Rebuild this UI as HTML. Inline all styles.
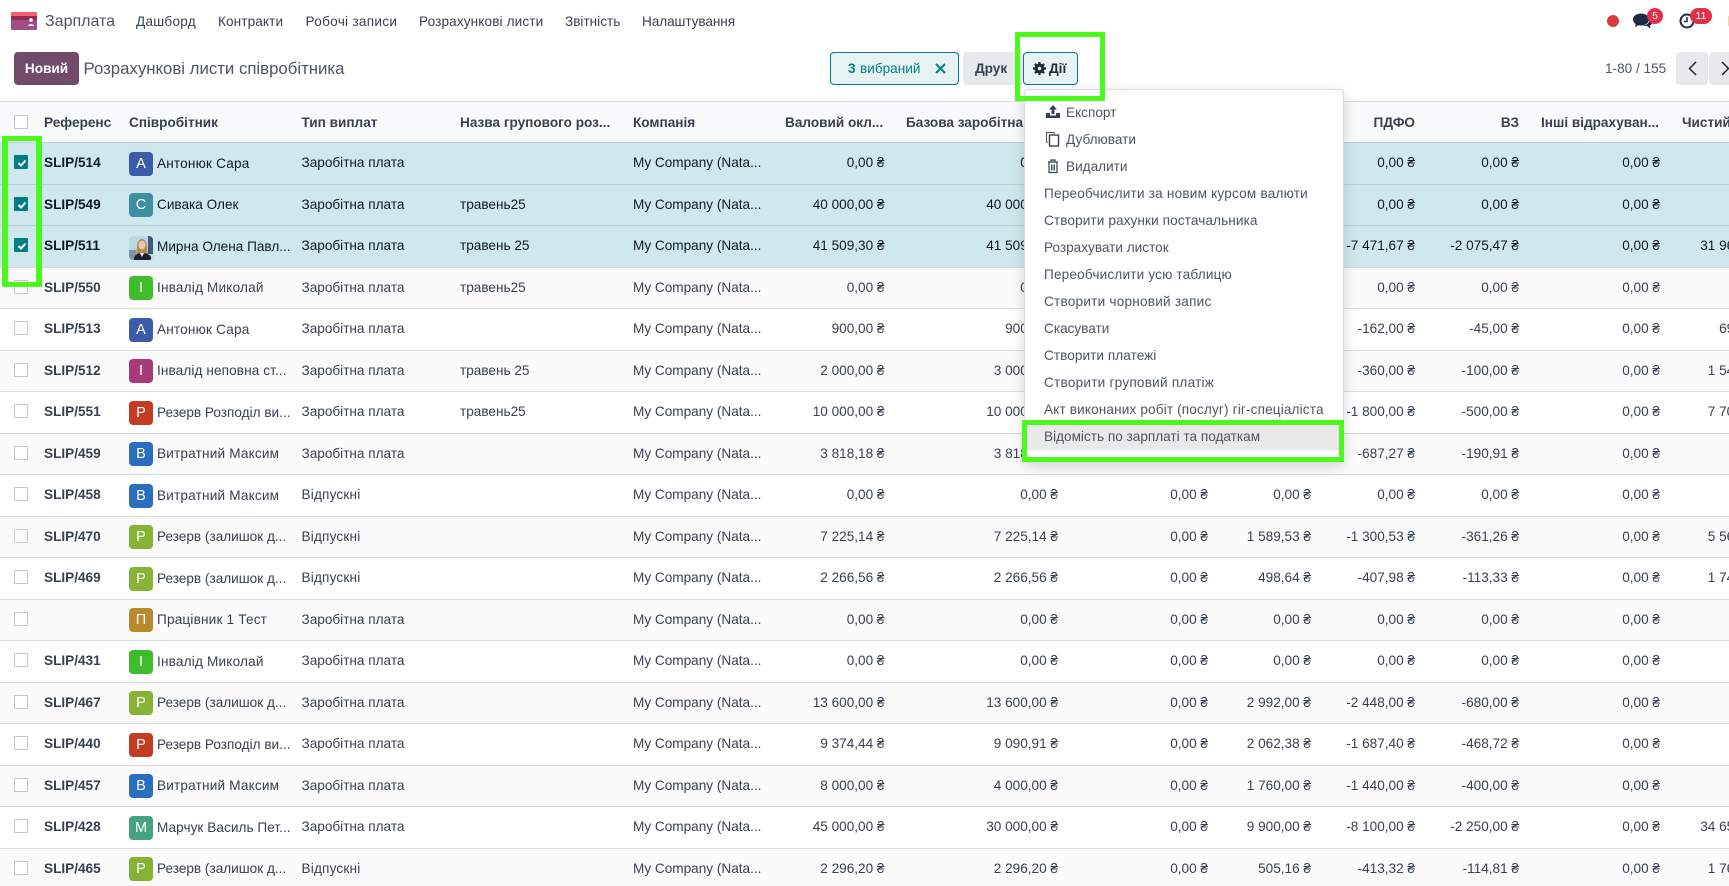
<!DOCTYPE html>
<html lang="uk"><head><meta charset="utf-8"><title>Зарплата</title>
<style>
*{box-sizing:border-box}
html,body{margin:0;padding:0;width:1729px;height:886px;overflow:hidden;background:#fff}
body{font-family:"Liberation Sans","Noto Sans CJK SC",sans-serif;font-size:13.6px;color:#374151;position:relative}
.t{position:absolute;white-space:nowrap;line-height:20px}
.nav{top:12px;color:#374151}
.r{position:absolute;left:0;width:1729px;border-top:1px solid #d9dbde;background:#fff;overflow:hidden}
.r.g{background:#fbfbfb}
.r.s{background:#cfe8ed;border-top-color:#b7d3d9;color:#111827}
.r>*{position:absolute;white-space:nowrap;line-height:20px;top:10px}
.cb{left:14px;top:12px!important;width:14px;height:14px;border:1px solid #c3c6ca;background:#fff;border-radius:1px}
.s .cb{background:#017e84;border-color:#017e84}
.cb svg{position:absolute;left:2px;top:2px}
.ref{left:44px;font-weight:bold;color:#374151}
.s .ref{color:#111827}
.av{left:129px;top:9px!important;width:24px;height:24px;border-radius:4px;color:#fff;text-align:center;line-height:24px!important;font-size:14.5px}
.nm{left:157px;top:11px!important}
.r[style*="height:42px"] .av,.r[style*="height:38px"] .av{top:8px!important}
.r[style*="height:42px"] .nm,.r[style*="height:38px"] .nm{top:10px!important}
.w{letter-spacing:.18px}
.ty{left:301.5px}
.gn{left:460px}
.co{left:633px}
.n{width:140px;text-align:right}
.a{left:744.5px}.b{left:918px}.c{left:1068px}.d{left:1171px}.e{left:1275px}.f{left:1379px}.h{left:1520px}.k{left:1632px}
.hd{position:absolute;left:0;top:101px;width:1729px;height:42px;background:#f9fafb;border-top:1px solid #d9dbde}
.hd span{position:absolute;top:11px;font-weight:bold;line-height:20px;white-space:nowrap;color:#374151}
.btn{position:absolute;top:52px;height:33px;border-radius:4px;line-height:33px;white-space:nowrap}
.dd{position:absolute;left:1024px;top:89px;width:320px;height:374px;background:#fff;border:1px solid #d9dbde;border-radius:4px;box-shadow:0 4px 14px rgba(0,0,0,.16);z-index:5}
.dd div{position:absolute;left:0;width:100%;height:27px;line-height:27px;padding-left:19px;white-space:nowrap;color:#4b5563}
.dd div.ic{padding-left:41px}
.dd svg{position:absolute;left:20px;top:5px}
.gb{position:absolute;border:5px solid #4cf91c;z-index:6}
</style></head><body>

<svg style="position:absolute;left:11px;top:12px" width="26" height="18" viewBox="0 0 26 18"><path d="M1 0h24a1 1 0 0 1 1 1v3H0V1a1 1 0 0 1 1-1z" fill="#f2616f"/><rect y="4" width="26" height="4" fill="#96294d"/><path d="M0 8h26v9a1 1 0 0 1-1 1H1a1 1 0 0 1-1-1z" fill="#a04c86"/><circle cx="20" cy="8" r="1.8" fill="#fff"/><path d="M17 14c0-2.400 6-2.400 6 0z" fill="#fff"/></svg>
<div class="t" style="left:45px;top:12px;font-size:16px;color:#4b5563">Зарплата</div>
<div class="t nav" style="left:136px;letter-spacing:.25px">Дашборд</div>
<div class="t nav" style="left:218px;letter-spacing:.1px">Контракти</div>
<div class="t nav" style="left:305.5px;letter-spacing:.28px">Робочі записи</div>
<div class="t nav" style="left:419px;letter-spacing:.12px">Розрахункові листи</div>
<div class="t nav" style="left:565px">Звітність</div>
<div class="t nav" style="left:642px;letter-spacing:-.08px">Налаштування</div>

<div style="position:absolute;left:1607px;top:15px;width:12px;height:12px;border-radius:50%;background:#d63c3c"></div>
<svg style="position:absolute;left:1633px;top:13px" width="20" height="17" viewBox="0 0 20 17"><ellipse cx="8" cy="6.500" rx="8" ry="6" fill="#1f2a44"/><path d="M3 10l-1 4 5-2.500z" fill="#1f2a44"/><path d="M16.500 5c2 1 3 2.500 3 4 0 1.500-1 2.800-2.500 3.500l.5 3-3.500-2.500c-1.500.2-3 0-4-.5 4 0 7-2.500 6.500-7.500z" fill="#1f2a44"/></svg>
<div style="position:absolute;left:1647px;top:8px;width:16px;height:16px;border-radius:8px;background:#e0304a;color:#fff;font-size:10.500px;line-height:16px;text-align:center">5</div>
<svg style="position:absolute;left:1679px;top:13px" width="16" height="16" viewBox="0 0 16 16"><circle cx="8" cy="8" r="6.500" fill="none" stroke="#1f2a44" stroke-width="2"/><path d="M8 4v4.500H5" fill="none" stroke="#1f2a44" stroke-width="1.500"/></svg>
<div style="position:absolute;left:1690px;top:8px;width:22px;height:16px;border-radius:8px;background:#e0304a;color:#fff;font-size:10.500px;line-height:16px;text-align:center">11</div>
<div style="position:absolute;left:1728px;top:16px;width:1px;height:10px;background:#f7d9a0"></div>

<div class="btn" style="left:14px;width:65px;background:#714b67;color:#fff;font-weight:bold;text-align:center">Новий</div>
<div class="t" style="left:83.5px;top:59px;font-size:16.8px;color:#4b5563">Розрахункові листи співробітника</div>

<div class="btn" style="left:830px;width:129px;background:#e6f2f3;border:1px solid #017e84;color:#017e84;line-height:31px"><b style="position:absolute;left:17px">3</b><span style="position:absolute;left:29px">вибраний</span><svg style="position:absolute;left:104px;top:10px" width="11" height="11" viewBox="0 0 11 11"><path d="M1 1l9 9M10 1l-9 9" stroke="#017e84" stroke-width="2" fill="none"/></svg></div>
<div class="btn" style="left:963px;width:62px;background:#e7e9ed;color:#374151;font-weight:bold;padding-left:12px">Друк</div>
<div class="btn" style="left:1023px;width:55px;background:#e6f2f3;border:1px solid #017e84;color:#1f2937;font-weight:bold;line-height:31px"><svg style="position:absolute;left:9px;top:9px" width="13" height="13" viewBox="0 0 13 13"><circle cx="6.500" cy="6.500" r="3.500" fill="none" stroke="#1f2937" stroke-width="3"/><path d="M6.500 0v13M0 6.500h13M1.900 1.900l9.200 9.200M11.100 1.900l-9.200 9.200" stroke="#1f2937" stroke-width="2.200"/><circle cx="6.500" cy="6.500" r="1.700" fill="#e6f2f3"/></svg><span style="position:absolute;left:25px">Дії</span></div>

<div class="t" style="left:1605px;top:59px;color:#4b5563">1-80 / 155</div>
<div class="btn" style="left:1676px;width:32px;background:#e7e9ed"><svg style="position:absolute;left:11.500px;top:9px" width="9" height="15" viewBox="0 0 9 15"><path d="M8 1L1.500 7.500 8 14" fill="none" stroke="#1f2937" stroke-width="1.500"/></svg></div>
<div class="btn" style="left:1709px;width:30px;background:#e7e9ed"><svg style="position:absolute;left:12px;top:9px" width="9" height="15" viewBox="0 0 9 15"><path d="M1 1l6.500 6.500L1 14" fill="none" stroke="#1f2937" stroke-width="1.500"/></svg></div>

<div class="hd">
<i style="position:absolute;left:14px;top:13px;width:14px;height:14px;border:1px solid #c3c6ca;background:#fff;border-radius:1px"></i>
<span style="left:44px">Референс</span><span style="left:129px">Співробітник</span><span style="left:301.500px">Тип виплат</span><span style="left:460px">Назва групового роз...</span><span style="left:633px">Компанія</span><span style="left:785px">Валовий окл...</span><span style="left:906px">Базова заробітна плата</span><span style="right:314px">ПДФО</span><span style="right:210px">ВЗ</span><span style="left:1541px">Інші відрахуван...</span><span style="left:1682px">Чистий</span>
</div>

<div class="r s" style="top:142px;height:43px"><i class="cb"><svg width="10" height="10" viewBox="0 0 10 10"><path d="M1.500 5l2.500 2.500L8.500 2.500" fill="none" stroke="#fff" stroke-width="2"/></svg></i><b class="ref">SLIP/514</b><span class="av" style="background:#3b5bab">А</span><span class="nm w">Антонюк Сара</span><span class="ty">Заробітна плата</span><span class="co">My Company (Nata...</span><span class="n a">0,00 ₴</span><span class="n b">0,00 ₴</span><span class="n c">0,00 ₴</span><span class="n d">0,00 ₴</span><span class="n e">0,00 ₴</span><span class="n f">0,00 ₴</span><span class="n h">0,00 ₴</span><span class="n k">0,00 ₴</span></div>

<div class="r s" style="top:184px;height:42px"><i class="cb"><svg width="10" height="10" viewBox="0 0 10 10"><path d="M1.500 5l2.500 2.500L8.500 2.500" fill="none" stroke="#fff" stroke-width="2"/></svg></i><b class="ref">SLIP/549</b><span class="av" style="background:#3f8fa3">С</span><span class="nm">Сивака Олек</span><span class="ty">Заробітна плата</span><span class="gn">травень25</span><span class="co">My Company (Nata...</span><span class="n a">40 000,00 ₴</span><span class="n b">40 000,00 ₴</span><span class="n c">0,00 ₴</span><span class="n d">0,00 ₴</span><span class="n e">0,00 ₴</span><span class="n f">0,00 ₴</span><span class="n h">0,00 ₴</span><span class="n k">0,00 ₴</span></div>

<div class="r s" style="top:225px;height:43px"><i class="cb"><svg width="10" height="10" viewBox="0 0 10 10"><path d="M1.500 5l2.500 2.500L8.500 2.500" fill="none" stroke="#fff" stroke-width="2"/></svg></i><b class="ref">SLIP/511</b><svg class="av" style="top:10px!important" width="24" height="24" viewBox="0 0 24 24"><rect width="24" height="24" rx="4" fill="#bcd6e4"/><path d="M0 14h7v10H2a2 2 0 0 1-2-2z" fill="#7c95a8"/><rect x="19" y="0" width="5" height="18" fill="#3e5a7a"/><path d="M8 12c0-6 2-9 5-9s5 3 5 9l1 6H7z" fill="#b58a55"/><ellipse cx="13" cy="9" rx="3.500" ry="4.500" fill="#ecc7ac"/><path d="M5 24c0-5 3-7 8-7s9 2 9 5v2z" fill="#1c2230"/><path d="M11 17l2 4 2-4z" fill="#f2f2f2"/></svg><span class="nm">Мирна Олена Павл...</span><span class="ty">Заробітна плата</span><span class="gn">травень 25</span><span class="co">My Company (Nata...</span><span class="n a">41 509,30 ₴</span><span class="n b">41 509,30 ₴</span><span class="n c">0,00 ₴</span><span class="n d">9 131,14 ₴</span><span class="n e">-7 471,67 ₴</span><span class="n f">-2 075,47 ₴</span><span class="n h">0,00 ₴</span><span class="n k">31 962,16 ₴</span></div>

<div class="r g" style="top:267px;height:42px"><i class="cb"></i><b class="ref">SLIP/550</b><span class="av" style="background:#3fbc2c">І</span><span class="nm w">Інвалід Миколай</span><span class="ty">Заробітна плата</span><span class="gn">травень25</span><span class="co">My Company (Nata...</span><span class="n a">0,00 ₴</span><span class="n b">0,00 ₴</span><span class="n c">0,00 ₴</span><span class="n d">0,00 ₴</span><span class="n e">0,00 ₴</span><span class="n f">0,00 ₴</span><span class="n h">0,00 ₴</span><span class="n k">0,00 ₴</span></div>

<div class="r" style="top:308px;height:43px"><i class="cb"></i><b class="ref">SLIP/513</b><span class="av" style="background:#3b5bab">А</span><span class="nm w">Антонюк Сара</span><span class="ty">Заробітна плата</span><span class="co">My Company (Nata...</span><span class="n a">900,00 ₴</span><span class="n b">900,00 ₴</span><span class="n c">0,00 ₴</span><span class="n d">198,00 ₴</span><span class="n e">-162,00 ₴</span><span class="n f">-45,00 ₴</span><span class="n h">0,00 ₴</span><span class="n k">693,00 ₴</span></div>

<div class="r g" style="top:350px;height:42px"><i class="cb"></i><b class="ref">SLIP/512</b><span class="av" style="background:#a63b78">І</span><span class="nm" style="letter-spacing:.1px">Інвалід неповна ст...</span><span class="ty">Заробітна плата</span><span class="gn">травень 25</span><span class="co">My Company (Nata...</span><span class="n a">2 000,00 ₴</span><span class="n b">3 000,00 ₴</span><span class="n c">0,00 ₴</span><span class="n d">440,00 ₴</span><span class="n e">-360,00 ₴</span><span class="n f">-100,00 ₴</span><span class="n h">0,00 ₴</span><span class="n k">1 540,00 ₴</span></div>

<div class="r" style="top:391px;height:43px"><i class="cb"></i><b class="ref">SLIP/551</b><span class="av" style="background:#c43c22">Р</span><span class="nm">Резерв Розподіл ви...</span><span class="ty">Заробітна плата</span><span class="gn">травень25</span><span class="co">My Company (Nata...</span><span class="n a">10 000,00 ₴</span><span class="n b">10 000,00 ₴</span><span class="n c">0,00 ₴</span><span class="n d">2 200,00 ₴</span><span class="n e">-1 800,00 ₴</span><span class="n f">-500,00 ₴</span><span class="n h">0,00 ₴</span><span class="n k">7 700,00 ₴</span></div>

<div class="r g" style="top:433px;height:42px"><i class="cb"></i><b class="ref">SLIP/459</b><span class="av" style="background:#2b6dbf">В</span><span class="nm w">Витратний Максим</span><span class="ty">Заробітна плата</span><span class="co">My Company (Nata...</span><span class="n a">3 818,18 ₴</span><span class="n b">3 818,18 ₴</span><span class="n c">0,00 ₴</span><span class="n d">840,00 ₴</span><span class="n e">-687,27 ₴</span><span class="n f">-190,91 ₴</span><span class="n h">0,00 ₴</span><span class="n k">0,00 ₴</span></div>

<div class="r" style="top:474px;height:43px"><i class="cb"></i><b class="ref">SLIP/458</b><span class="av" style="background:#2b6dbf">В</span><span class="nm w">Витратний Максим</span><span class="ty w">Відпускні</span><span class="co">My Company (Nata...</span><span class="n a">0,00 ₴</span><span class="n b">0,00 ₴</span><span class="n c">0,00 ₴</span><span class="n d">0,00 ₴</span><span class="n e">0,00 ₴</span><span class="n f">0,00 ₴</span><span class="n h">0,00 ₴</span><span class="n k">0,00 ₴</span></div>

<div class="r g" style="top:516px;height:42px"><i class="cb"></i><b class="ref">SLIP/470</b><span class="av" style="background:#86b236">Р</span><span class="nm">Резерв (залишок д...</span><span class="ty w">Відпускні</span><span class="co">My Company (Nata...</span><span class="n a">7 225,14 ₴</span><span class="n b">7 225,14 ₴</span><span class="n c">0,00 ₴</span><span class="n d">1 589,53 ₴</span><span class="n e">-1 300,53 ₴</span><span class="n f">-361,26 ₴</span><span class="n h">0,00 ₴</span><span class="n k">5 563,35 ₴</span></div>

<div class="r" style="top:557px;height:43px"><i class="cb"></i><b class="ref">SLIP/469</b><span class="av" style="background:#86b236">Р</span><span class="nm">Резерв (залишок д...</span><span class="ty w">Відпускні</span><span class="co">My Company (Nata...</span><span class="n a">2 266,56 ₴</span><span class="n b">2 266,56 ₴</span><span class="n c">0,00 ₴</span><span class="n d">498,64 ₴</span><span class="n e">-407,98 ₴</span><span class="n f">-113,33 ₴</span><span class="n h">0,00 ₴</span><span class="n k">1 745,25 ₴</span></div>

<div class="r g" style="top:599px;height:42px"><i class="cb"></i><span class="av" style="background:#b88a2b">П</span><span class="nm w">Працівник 1 Тест</span><span class="ty">Заробітна плата</span><span class="co">My Company (Nata...</span><span class="n a">0,00 ₴</span><span class="n b">0,00 ₴</span><span class="n c">0,00 ₴</span><span class="n d">0,00 ₴</span><span class="n e">0,00 ₴</span><span class="n f">0,00 ₴</span><span class="n h">0,00 ₴</span><span class="n k">0,00 ₴</span></div>

<div class="r" style="top:640px;height:43px"><i class="cb"></i><b class="ref">SLIP/431</b><span class="av" style="background:#3fbc2c">І</span><span class="nm w">Інвалід Миколай</span><span class="ty">Заробітна плата</span><span class="co">My Company (Nata...</span><span class="n a">0,00 ₴</span><span class="n b">0,00 ₴</span><span class="n c">0,00 ₴</span><span class="n d">0,00 ₴</span><span class="n e">0,00 ₴</span><span class="n f">0,00 ₴</span><span class="n h">0,00 ₴</span><span class="n k">0,00 ₴</span></div>

<div class="r g" style="top:682px;height:42px"><i class="cb"></i><b class="ref">SLIP/467</b><span class="av" style="background:#86b236">Р</span><span class="nm">Резерв (залишок д...</span><span class="ty">Заробітна плата</span><span class="co">My Company (Nata...</span><span class="n a">13 600,00 ₴</span><span class="n b">13 600,00 ₴</span><span class="n c">0,00 ₴</span><span class="n d">2 992,00 ₴</span><span class="n e">-2 448,00 ₴</span><span class="n f">-680,00 ₴</span><span class="n h">0,00 ₴</span><span class="n k">0,00 ₴</span></div>

<div class="r" style="top:723px;height:43px"><i class="cb"></i><b class="ref">SLIP/440</b><span class="av" style="background:#c43c22">Р</span><span class="nm">Резерв Розподіл ви...</span><span class="ty">Заробітна плата</span><span class="co">My Company (Nata...</span><span class="n a">9 374,44 ₴</span><span class="n b">9 090,91 ₴</span><span class="n c">0,00 ₴</span><span class="n d">2 062,38 ₴</span><span class="n e">-1 687,40 ₴</span><span class="n f">-468,72 ₴</span><span class="n h">0,00 ₴</span><span class="n k">0,00 ₴</span></div>

<div class="r g" style="top:765px;height:42px"><i class="cb"></i><b class="ref">SLIP/457</b><span class="av" style="background:#2b6dbf">В</span><span class="nm w">Витратний Максим</span><span class="ty">Заробітна плата</span><span class="co">My Company (Nata...</span><span class="n a">8 000,00 ₴</span><span class="n b">4 000,00 ₴</span><span class="n c">0,00 ₴</span><span class="n d">1 760,00 ₴</span><span class="n e">-1 440,00 ₴</span><span class="n f">-400,00 ₴</span><span class="n h">0,00 ₴</span><span class="n k">0,00 ₴</span></div>

<div class="r" style="top:806px;height:43px"><i class="cb"></i><b class="ref">SLIP/428</b><span class="av" style="background:#46a382">М</span><span class="nm" style="letter-spacing:.05px">Марчук Василь Пет...</span><span class="ty">Заробітна плата</span><span class="co">My Company (Nata...</span><span class="n a">45 000,00 ₴</span><span class="n b">30 000,00 ₴</span><span class="n c">0,00 ₴</span><span class="n d">9 900,00 ₴</span><span class="n e">-8 100,00 ₴</span><span class="n f">-2 250,00 ₴</span><span class="n h">0,00 ₴</span><span class="n k">34 650,00 ₴</span></div>

<div class="r g" style="top:848px;height:38px"><i class="cb"></i><b class="ref">SLIP/465</b><span class="av" style="background:#86b236">Р</span><span class="nm">Резерв (залишок д...</span><span class="ty w">Відпускні</span><span class="co">My Company (Nata...</span><span class="n a">2 296,20 ₴</span><span class="n b">2 296,20 ₴</span><span class="n c">0,00 ₴</span><span class="n d">505,16 ₴</span><span class="n e">-413,32 ₴</span><span class="n f">-114,81 ₴</span><span class="n h">0,00 ₴</span><span class="n k">1 768,07 ₴</span></div>

<div class="dd">
<div class="ic" style="top:9px"><svg width="16" height="16" viewBox="0 0 16 16"><path d="M8 1l4 4.500H9.500V10h-3V5.500H4z" fill="#374151"/><path d="M1 9h4v2.500h6V9h4v5H1z" fill="#374151"/></svg>Експорт</div>
<div class="ic" style="top:36px"><svg width="16" height="16" viewBox="0 0 16 16"><path d="M3 11H1.500V1.500H9V3" fill="none" stroke="#4b5563" stroke-width="1"/><rect x="4.500" y="4" width="9" height="11" fill="none" stroke="#374151" stroke-width="1.400"/></svg>Дублювати</div>
<div class="ic" style="top:63px"><svg width="16" height="16" viewBox="0 0 16 16"><path d="M3 4h10M6 4V2h4v2M4 4v10.500h8V4" fill="none" stroke="#374151" stroke-width="1.200"/><path d="M6.500 6.500v6M9.500 6.500v6M8 6.500v6" stroke="#374151" stroke-width=".9"/></svg>Видалити</div>
<div style="top:90px;letter-spacing:.2px">Переобчислити за новим курсом валюти</div>
<div style="top:117px;letter-spacing:.1px">Створити рахунки постачальника</div>
<div style="top:144px">Розрахувати листок</div>
<div style="top:171px;letter-spacing:.17px">Переобчислити усю таблицю</div>
<div style="top:198px;letter-spacing:.22px">Створити чорновий запис</div>
<div style="top:225px">Скасувати</div>
<div style="top:252px;letter-spacing:.05px">Створити платежі</div>
<div style="top:279px;letter-spacing:.23px">Створити груповий платіж</div>
<div style="top:306px;letter-spacing:.14px">Акт виконаних робіт (послуг) гіг-спеціаліста</div>
<div style="top:333px;background:#e9e9e9">Відомість по зарплаті та податкам</div>
</div>

<div class="gb" style="left:2px;top:136px;width:40px;height:151px;border-width:5px 6px"></div>
<div class="gb" style="left:1015px;top:32px;width:90px;height:69px"></div>
<div class="gb" style="left:1022px;top:420px;width:322px;height:42px"></div>
</body></html>
